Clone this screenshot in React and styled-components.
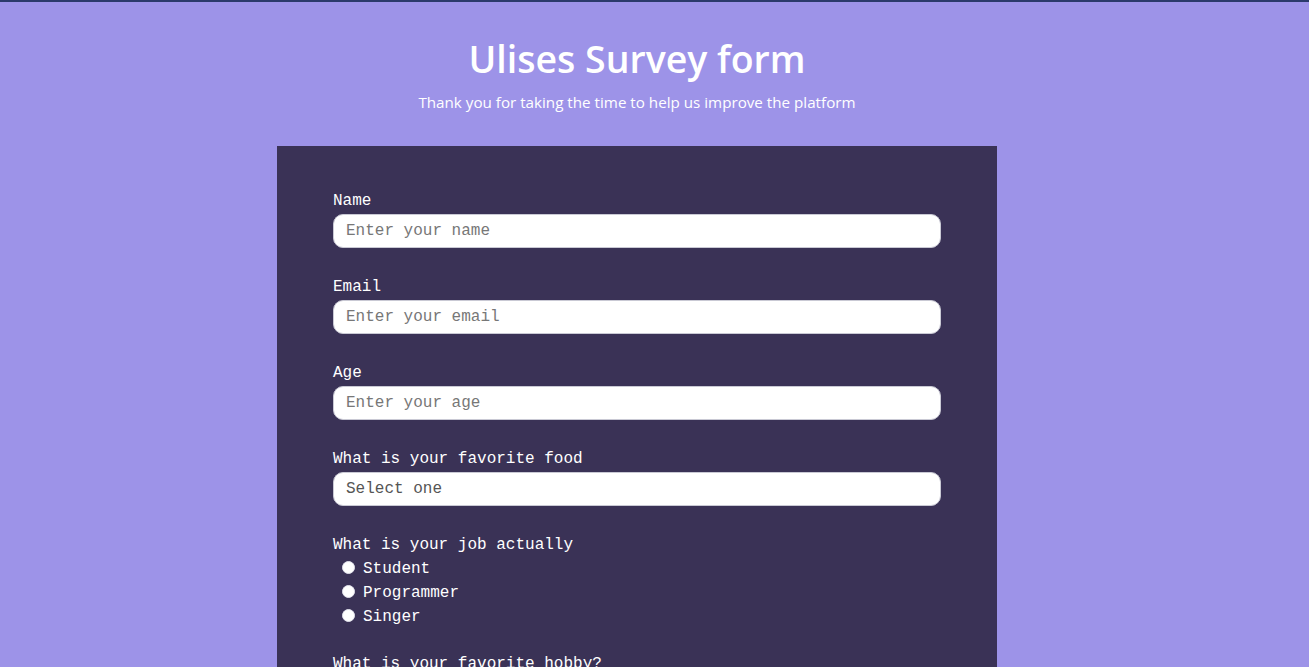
import React from "react";
import styled, { createGlobalStyle } from "styled-components";

const GlobalStyle = createGlobalStyle`
  * {
    box-sizing: border-box;
  }
  body {
    margin: 0;
    background-color: #9d93e8;
    border-top: 2px solid #2b3a6b;
    font-family: "Open Sans", "Noto Sans", sans-serif;
  }
`;

const Page = styled.div`
  display: flex;
  flex-direction: column;
  align-items: center;
  padding: 33px 35px 0 0;
`;

const Header = styled.header`
  text-align: center;
  color: #fff;
  margin-bottom: 34px;
`;

const Title = styled.h1`
  margin: 0;
  font-size: 37.5px;
  font-weight: 600;
  line-height: 48px;
`;

const Subtitle = styled.p`
  margin: 9px 0 0;
  font-size: 15.2px;
  line-height: 20px;
`;

const Card = styled.form`
  width: 720px;
  background-color: #3a3256;
  padding: 46px 56px 40px;
  display: flex;
  flex-direction: column;
  gap: 30px;
  font-family: "Liberation Mono", "Courier New", monospace;
  color: #fff;
`;

const Group = styled.div`
  display: flex;
  flex-direction: column;
  margin-bottom: ${(p) => (p.$tight ? "-4px" : "0")};
`;

const Label = styled.label`
  font-size: 16px;
  line-height: 18px;
  margin-bottom: ${(p) => (p.$list ? "3px" : "4px")};
`;

const fieldStyles = `
  width: 100%;
  height: 34px;
  padding: 0 12px;
  border: 1px solid #c9c9d4;
  border-radius: 10px;
  background: #fff;
  font-family: "Liberation Mono", "Courier New", monospace;
  font-size: 16px;
  outline: none;
`;

const Input = styled.input`
  ${fieldStyles}
  &::placeholder {
    color: #777;
  }
`;

const Select = styled.select`
  ${fieldStyles}
  appearance: none;
  color: #555;
`;

const RadioRow = styled.label`
  display: flex;
  align-items: center;
  height: 24px;
  padding-left: 9px;
  font-size: 16px;
`;

const Radio = styled.input`
  appearance: none;
  width: 13px;
  height: 13px;
  margin: 0 8px 4px 0;
  border-radius: 50%;
  background: #fff;
  border: 1px solid #e4e4ee;
`;

const Textarea = styled.textarea`
  ${fieldStyles}
  height: 90px;
  padding: 8px 12px;
`;

const jobs = ["Student", "Programmer", "Singer"];

const App = () => {
  return (
    <Page>
      <GlobalStyle />
      <Header>
        <Title>Ulises Survey form</Title>
        <Subtitle>Thank you for taking the time to help us improve the platform</Subtitle>
      </Header>
      <Card onSubmit={(e) => e.preventDefault()}>
        <Group>
          <Label htmlFor="name">Name</Label>
          <Input id="name" type="text" placeholder="Enter your name" />
        </Group>
        <Group>
          <Label htmlFor="email">Email</Label>
          <Input id="email" type="email" placeholder="Enter your email" />
        </Group>
        <Group>
          <Label htmlFor="age">Age</Label>
          <Input id="age" type="number" placeholder="Enter your age" />
        </Group>
        <Group>
          <Label htmlFor="food">What is your favorite food</Label>
          <Select id="food" defaultValue="">
            <option value="" disabled>
              Select one
            </option>
            <option>Pizza</option>
            <option>Tacos</option>
            <option>Sushi</option>
          </Select>
        </Group>
        <Group $tight>
          <Label $list>What is your job actually</Label>
          {jobs.map((job) => (
            <RadioRow key={job}>
              <Radio type="radio" name="job" value={job} />
              {job}
            </RadioRow>
          ))}
        </Group>
        <Group>
          <Label htmlFor="hobby">What is your favorite hobby?</Label>
          <Textarea id="hobby" />
        </Group>
      </Card>
    </Page>
  );
};

export default App;
